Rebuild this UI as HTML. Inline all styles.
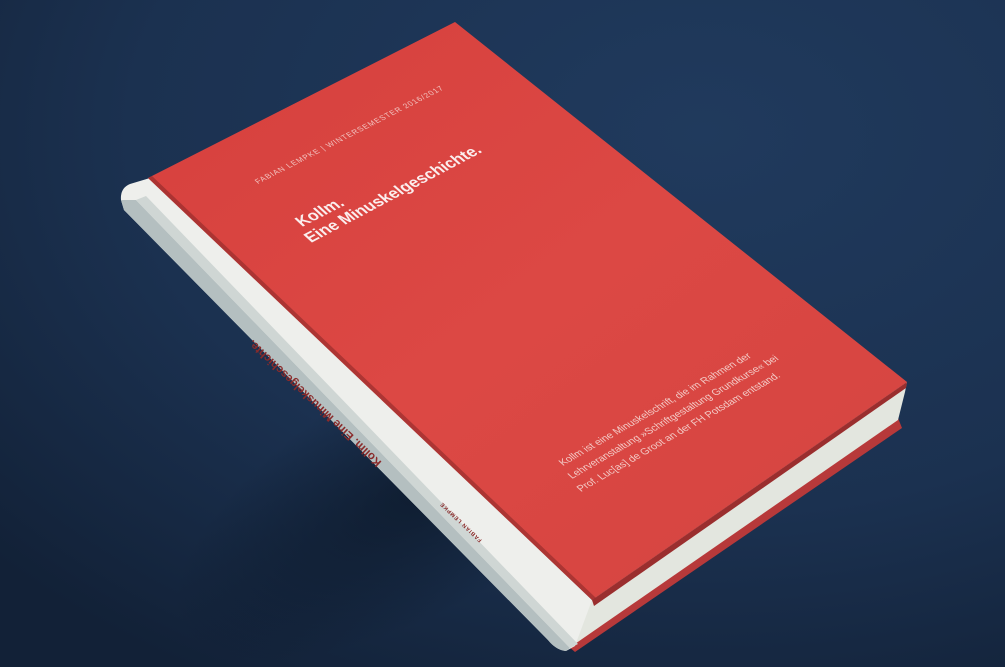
<!DOCTYPE html>
<html><head><meta charset="utf-8"><style>
html,body{margin:0;padding:0;width:1005px;height:667px;overflow:hidden;background:#1b304f}
svg{display:block}
</style></head><body>
<svg width="1005" height="667" viewBox="0 0 1005 667" xmlns="http://www.w3.org/2000/svg" style="overflow:hidden">
<defs>
<radialGradient id="bg" cx="0.7" cy="0.2" r="0.95">
<stop offset="0" stop-color="#203a5d"/><stop offset="0.6" stop-color="#1b3150"/><stop offset="1" stop-color="#122137"/>
</radialGradient>
<linearGradient id="red" x1="0" y1="0" x2="1" y2="1">
<stop offset="0" stop-color="#d6403d"/><stop offset="0.5" stop-color="#dc4844"/><stop offset="1" stop-color="#d44440"/>
</linearGradient>
<radialGradient id="shadow" cx="0.5" cy="0.5" r="0.5">
<stop offset="0" stop-color="#07101c" stop-opacity="0.6"/><stop offset="1" stop-color="#07101c" stop-opacity="0"/>
</radialGradient>
</defs>
<rect width="1005" height="667" fill="url(#bg)"/>
<ellipse cx="440" cy="480" rx="300" ry="120" transform="rotate(-30 440 480)" fill="url(#shadow)"/>
<!-- back cover edge -->
<polygon points="898,418 902,428 575,652 568,646" fill="#b7393a"/>
<!-- pages -->
<polygon points="592,600 907,382 905,392 898,420 572,646 575,620" fill="#e3e6df"/>
<polygon points="592,600 907,382 906,388 594,606" fill="#9a2e2e"/>
<!-- spine -->
<path d="M150,178 L130,184 Q120,188 121,200 L124,210 L548,640 Q556,650 566,651 L575,646 L592,600 Z" fill="#eeefec"/>
<path d="M121,200 L124,210 L548,640 Q556,650 566,651 L570,648 L136,200 Z" fill="#b4bfc0"/>
<path d="M136,200 L570,648 L578,644 L146,196 Z" fill="#cfd6d4"/>
<!-- cover -->
<polygon points="148,178 455,22 907,382 592,600" fill="url(#red)"/>
<polygon points="148,178 152,176 596,598 592,600" fill="#8e2a2a" opacity="0.6"/>
<g font-family="'Liberation Sans',sans-serif" fill="#f6d8d4">
<text transform="translate(258,184) rotate(-27) skewX(20)" font-size="7.5" letter-spacing="0.9" opacity="0.85">FABIAN LEMPKE  |  WINTERSEMESTER 2016/2017</text>
<text transform="translate(302,227) rotate(-27) skewX(20)" font-size="16" font-weight="bold" fill="#fbeeee">Kollm.</text>
<text transform="translate(311,243) rotate(-28) skewX(20)" font-size="16" font-weight="bold" fill="#fbeeee">Eine Minuskelgeschichte.</text>
<text transform="translate(563,466) rotate(-30) skewX(18)" font-size="10" opacity="0.9">Kollm ist eine Minuskelschrift, die im Rahmen der</text>
<text transform="translate(572,479) rotate(-30) skewX(18)" font-size="10" opacity="0.9">Lehrveranstaltung »Schriftgestaltung Grundkurse« bei</text>
<text transform="translate(581,492) rotate(-30) skewX(18)" font-size="10" opacity="0.9">Prof. Luc[as] de Groot an der FH Potsdam entstand.</text>
</g>
<g font-family="'Liberation Sans',sans-serif" fill="#8a2b2b">
<text transform="translate(382,462) rotate(-136.5)" font-size="11.5" font-weight="bold">Kollm. Eine Minuskelgeschichte.</text>
<text transform="translate(482,540) rotate(-136.5)" font-size="5.5" font-weight="bold" letter-spacing="0.8">FABIAN LEMPKE</text>
</g>
</svg>
</body></html>
